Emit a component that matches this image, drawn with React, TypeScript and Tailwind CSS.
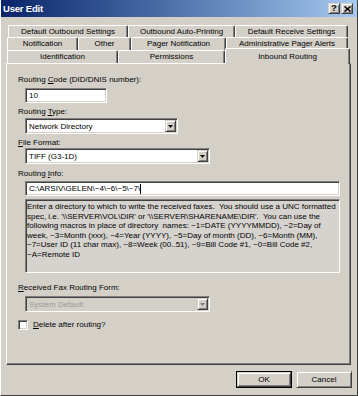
import React from "react";

const sunken =
  "border border-t-[#808080] border-l-[#808080] border-b-white border-r-white shadow-[inset_1px_1px_0_#404040,inset_-1px_-1px_0_#d4d0c8]";
const raised =
  "border border-t-[#d4d0c8] border-l-[#d4d0c8] border-b-[#404040] border-r-[#404040] shadow-[inset_1px_1px_0_#ffffff,inset_-1px_-1px_0_#808080]";

function Tab({ cls, label }: { cls: string; label: string }) {
  return (
    <div
      className={
        "flex items-center justify-center h-full border-t border-l border-r border-t-white border-l-white border-r-[#404040] shadow-[inset_-1px_0_0_#808080] rounded-t-[2px] whitespace-nowrap " +
        cls
      }
    >
      {label}
    </div>
  );
}

function Arrow({ disabled }: { disabled?: boolean }) {
  return (
    <div className={"w-[11px] h-full flex items-center justify-center bg-[#d4d0c8] " + raised}>
      <svg width="5" height="3" viewBox="0 0 5 3">
        <polygon points="0,0 5,0 2.5,3" fill={disabled ? "#808080" : "#000"} />
      </svg>
    </div>
  );
}

function Select({ cls, value, disabled }: { cls: string; value: string; disabled?: boolean }) {
  return (
    <div
      className={
        "ml-[18px] h-[16px] flex items-stretch " +
        sunken +
        " " +
        (disabled ? "bg-[#d4d0c8] text-[#9a9a9a] " : "bg-white text-black ") +
        cls
      }
    >
      <div className="flex-1 pl-[3px] pt-[1px] flex items-center leading-none">{value}</div>
      <div className="p-[1px] flex">
        <Arrow disabled={disabled} />
      </div>
    </div>
  );
}

function Label({ children, cls }: { children: React.ReactNode; cls: string }) {
  return <div className={"ml-[11px] h-[10px] leading-[10px] whitespace-nowrap " + cls}>{children}</div>;
}

const desc = [
  "Enter a directory to which to write the received faxes.  You should use a UNC formatted",
  "spec, i.e. '\\\\SERVER\\VOL\\DIR' or '\\\\SERVER\\SHARENAME\\DIR'.  You can use the",
  "following macros in place of directory  names: ~1=DATE (YYYYMMDD), ~2=Day of",
  "week, ~3=Month (xxx), ~4=Year (YYYY), ~5=Day of month (DD), ~6=Month (MM),",
  "~7=User ID (11 char max), ~8=Week (00..51), ~9=Bill Code #1, ~0=Bill Code #2,",
  "~A=Remote ID",
];

export default function App() {
  return (
    <div className="w-[358px] h-[396px] bg-[#d4d0c8] text-black text-[8px] font-['Liberation_Sans',Arial,sans-serif] flex flex-col border-r border-b border-r-[#404040] border-b-[#404040] border-l border-l-white overflow-hidden">
      {/* Title bar */}
      <div className="h-[17px] bg-linear-to-r from-[#0a246a] to-[#a6caf0] flex items-center pl-[2px] pr-[4px]">
        <div className="text-white font-bold text-[9.5px] leading-none flex-1 tracking-[-0.2px]">User Edit</div>
        <div className={"w-[12px] h-[11px] bg-[#d4d0c8] flex items-center justify-center text-[9px] font-bold leading-none " + raised}>
          ?
        </div>
        <div className={"ml-[1px] w-[12px] h-[11px] bg-[#d4d0c8] flex items-center justify-center " + raised}>
          <svg width="7" height="6" viewBox="0 0 7 6">
            <path d="M0.5 0.5 L6.5 5.5 M6.5 0.5 L0.5 5.5" stroke="#000" strokeWidth="1.5" />
          </svg>
        </div>
      </div>

      {/* Tabs */}
      <div className="mt-[8px] flex flex-col">
        <div className="flex h-[12px] ml-[7px]">
          <Tab cls="w-[120px]" label="Default Outbound Settings" />
          <Tab cls="w-[107px]" label="Outbound Auto-Printing" />
          <Tab cls="w-[113px]" label="Default Receive Settings" />
        </div>
        <div className="flex h-[13px] ml-[6px]">
          <Tab cls="w-[71px]" label="Notification" />
          <Tab cls="w-[53px]" label="Other" />
          <Tab cls="w-[95px]" label="Pager Notification" />
          <Tab cls="w-[122px]" label="Administrative Pager Alerts" />
        </div>
        <div className="flex h-[13px] ml-[6px] items-end">
          <Tab cls="w-[111px]" label="Identification" />
          <Tab cls="w-[107px]" label="Permissions" />
          <div className="relative z-10 -mt-[2px] -mb-[1px] h-[16px] w-[125px] bg-[#d4d0c8] flex items-start justify-center pt-[2px] border-t border-l border-r border-t-white border-l-white border-r-[#404040] shadow-[inset_-1px_0_0_#808080] rounded-t-[2px] whitespace-nowrap self-end">
            Inbound Routing
          </div>
        </div>
      </div>

      {/* Panel */}
      <div className="ml-[5px] w-[345px] h-[302px] border border-t-white border-l-white border-r-[#404040] border-b-[#404040] shadow-[inset_-1px_-1px_0_#808080] flex flex-col pt-[11px]">
        <Label cls="">
          Routing <span className="underline">C</span>ode (DID/DNIS number):
        </Label>
        <div className={"ml-[18px] mt-[3px] w-[82px] h-[15px] bg-white pl-[3px] flex items-center leading-none " + sunken}>
          10
        </div>

        <Label cls="mt-[4px]">
          Routing <span className="underline">T</span>ype:
        </Label>
        <Select cls="mt-[1px] w-[153px] h-[15px]" value="Network Directory" />

        <Label cls="mt-[4px]">
          <span className="underline">F</span>ile Format:
        </Label>
        <Select cls="mt-[0px] w-[185px]" value="TIFF (G3-1D)" />

        <Label cls="mt-[5px]">
          Routing <span className="underline">I</span>nfo:
        </Label>
        <div className={"ml-[18px] mt-[2px] w-[315px] h-[15px] bg-white pl-[3px] flex items-center leading-none whitespace-pre " + sunken}>
          {"C:\\ARSIV\\GELEN\\~4\\~6\\~5\\~7\\"}
          <span className="inline-block w-[1px] h-[10px] bg-black" />
        </div>
        <div className={"ml-[18px] mt-[3px] w-[315px] h-[74px] bg-[#d6d3ce] pl-[1px] pt-[2px] " + sunken}>
          {desc.map((l, i) => (
            <div key={i} className="whitespace-pre leading-[9.6px] h-[9.6px]">
              {l}
            </div>
          ))}
        </div>

        <Label cls="mt-[10px]">
          <span className="underline">R</span>eceived Fax Routing Form:
        </Label>
        <Select cls="mt-[3px] w-[185px]" value="System Default" disabled />

        <div className="ml-[11px] mt-[8px] flex items-center">
          <div className={"w-[10px] h-[10px] bg-white " + sunken} />
          <div className="ml-[5px] leading-none">
            <span className="underline">D</span>elete after routing?
          </div>
        </div>
      </div>

      {/* Buttons */}
      <div className="mt-[6px] flex justify-end pr-[5px] gap-[4px]">
        <div className="w-[56px] h-[17px] border border-black">
          <div className={"w-full h-full flex items-center justify-center leading-none " + raised}>OK</div>
        </div>
        <div className={"w-[56px] h-[17px] flex items-center justify-center leading-none " + raised}>Cancel</div>
      </div>
    </div>
  );
}
